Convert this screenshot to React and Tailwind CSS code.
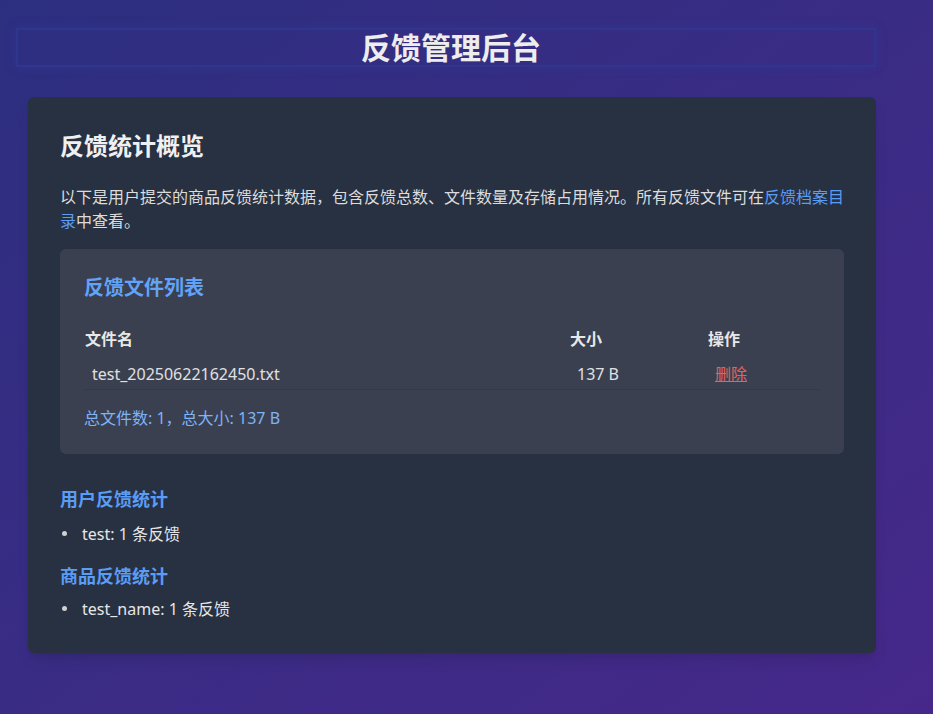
import React from "react";

const files = [{ name: "test_20250622162450.txt", size: "137 B" }];

const userStats = [{ name: "test", count: 1 }];
const productStats = [{ name: "test_name", count: 1 }];

const StatList = ({ items }) => (
  <ul className="text-base leading-6">
    {items.map((it) => (
      <li key={it.name} className="flex items-center">
        <span className="ml-[2px] mr-[15px] h-[5px] w-[5px] rounded-full bg-[#d0d0d0]"></span>
        {it.name}: {it.count} 条反馈
      </li>
    ))}
  </ul>
);

const App = () => {
  return (
    <div
      className="min-h-screen bg-linear-to-br from-[#2c2f80] to-[#46288a] text-[#e6e6e6]"
      style={{ fontFamily: '"Segoe UI", "Noto Sans", "Noto Sans CJK SC", sans-serif' }}
    >
      <div className="w-[860px] ml-4 pt-7">
        {/* Header */}
        <header className="h-[39px] flex items-center justify-center pl-[10px] border-2 border-[#2f3690] shadow-[0_0_8px_rgba(48,58,150,0.6)]">
          <h1 className="text-[30px] font-bold leading-none text-[#ededed]">反馈管理后台</h1>
        </header>

        {/* Main card */}
        <main className="ml-3 mt-[30px] w-[848px] rounded-md bg-[#283141] px-8 pt-[31px] pb-[32px] shadow-lg">
          <h2 className="text-2xl font-bold leading-9 text-[#f0f0f0]">反馈统计概览</h2>
          <p className="-mr-1 mt-[21px] text-base leading-6 text-[#dcdcdc]">
            以下是用户提交的商品反馈统计数据，包含反馈总数、文件数量及存储占用情况。所有反馈文件可在
            <a href="#" className="text-[#5b9cf5]">反馈档案目录</a>
            中查看。
          </p>

          {/* File list panel */}
          <section className="mt-4 rounded-md bg-[#3a4050] px-6 pt-6 pb-6">
            <h3 className="text-xl font-bold leading-[30px] text-[#62a3f7]">反馈文件列表</h3>
            <table className="mt-4 w-full table-fixed border-collapse text-base">
              <thead>
                <tr className="h-10">
                  <th className="w-[485px] px-px text-left font-bold text-[#e8e8e8]">文件名</th>
                  <th className="w-[138px] px-px text-left font-bold text-[#e8e8e8]">大小</th>
                  <th className="px-px text-left font-bold text-[#e8e8e8]">操作</th>
                </tr>
              </thead>
              <tbody>
                {files.map((f) => (
                  <tr key={f.name} className="h-[30px] border-b border-[#333a48]">
                    <td className="px-2 leading-6 text-[#e0e0e0]">{f.name}</td>
                    <td className="px-2 leading-6 text-[#e0e0e0]">{f.size}</td>
                    <td className="px-2 leading-6">
                      <a href="#" className="text-[#e6625c] underline">删除</a>
                    </td>
                  </tr>
                ))}
              </tbody>
            </table>
            <p className="mt-4 text-base leading-6 text-[#7fb3f5]">总文件数: 1，总大小: 137 B</p>
          </section>

          {/* Stats */}
          <h3 className="mt-8 text-lg font-bold leading-[27px] text-[#5b9cf5]">用户反馈统计</h3>
          <div className="mt-[9px]">
            <StatList items={userStats} />
          </div>
          <h3 className="mt-[17px] text-lg font-bold leading-[27px] text-[#5b9cf5]">商品反馈统计</h3>
          <div className="mt-[7px]">
            <StatList items={productStats} />
          </div>
        </main>
      </div>
    </div>
  );
};

export default App;
